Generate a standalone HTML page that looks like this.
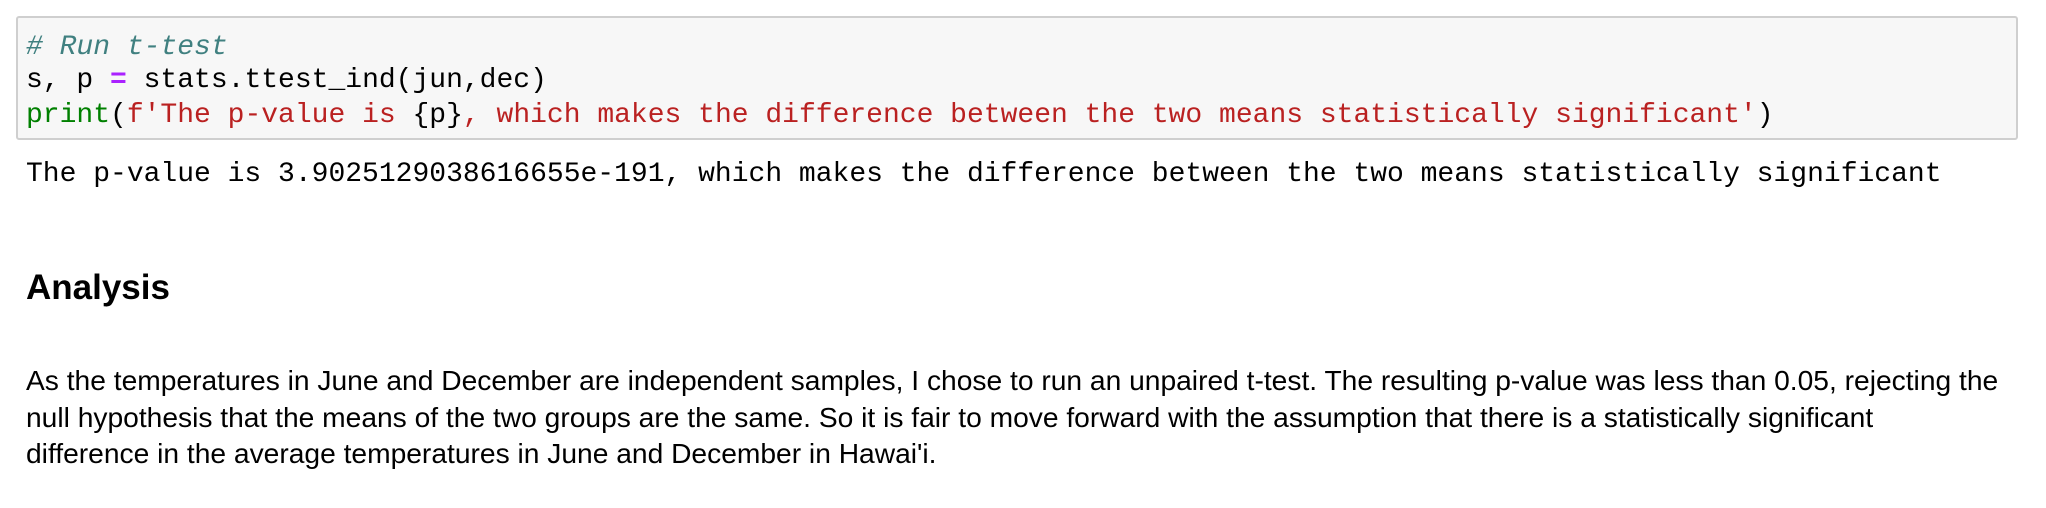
<!DOCTYPE html>
<html><head><style>
body{margin:0;width:2046px;height:508px;background:#fff;overflow:hidden;position:relative}
.box{position:absolute;left:16px;top:16px;width:2002px;height:124px;background:#f7f7f7;border:2px solid #cfcfcf;border-radius:3px;box-sizing:border-box}
.mono{font-family:"Liberation Mono",monospace;font-size:28px;white-space:pre;position:absolute;left:26px;color:#000}
.c{color:#408080;font-style:italic}
.o{color:#aa22ff;font-weight:bold}
.k{color:#008000}
.s{color:#ba2121}
h2{position:absolute;left:26px;top:268px;margin:0;font-family:"Liberation Sans",sans-serif;font-size:35px;font-weight:bold}
p{position:absolute;left:26px;top:362px;margin:0;width:2010px;font-family:"Liberation Sans",sans-serif;font-size:28.2px;line-height:36.5px;color:#000;white-space:nowrap}
</style></head><body>
<div class="box"></div>
<div class="mono" style="top:32px"><span class="c"># Run t-test</span></div>
<div class="mono" style="top:65px">s, p <span class="o">=</span> stats.ttest_ind(jun,dec)</div>
<div class="mono" style="top:100px"><span class="k">print</span>(<span class="s">f'The p-value is </span>{p}<span class="s">, which makes the difference between the two means statistically significant'</span>)</div>
<div class="mono" style="top:159px">The p-value is 3.9025129038616655e-191, which makes the difference between the two means statistically significant</div>
<h2>Analysis</h2>
<p>As the temperatures in June and December are independent samples, I chose to run an unpaired t-test. The resulting p-value was less than 0.05, rejecting the<br>null hypothesis that the means of the two groups are the same. So it is fair to move forward with the assumption that there is a statistically significant<br>difference in the average temperatures in June and December in Hawai'i.</p>
</body></html>
